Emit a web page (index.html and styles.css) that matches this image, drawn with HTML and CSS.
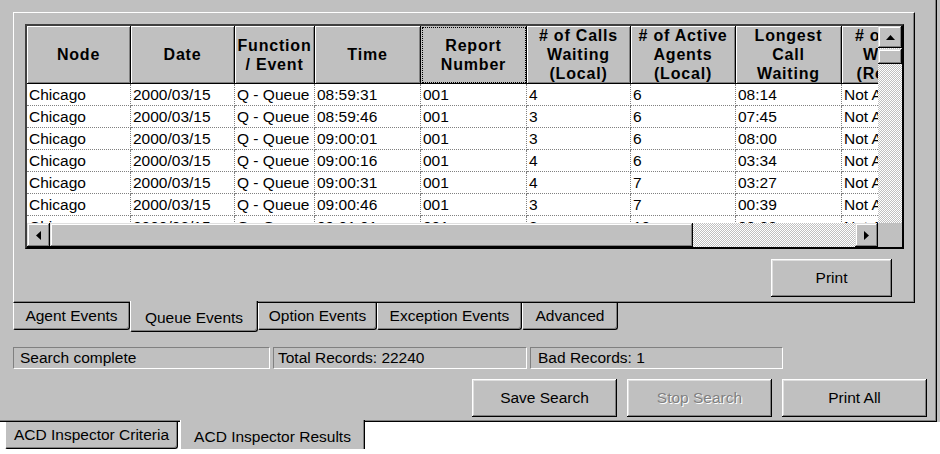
FILE: index.html
```html
<!DOCTYPE html>
<html lang="en">
<head>
  <meta charset="UTF-8">
  <title>ACD Inspector Results</title>
  <link rel="stylesheet" href="styles.css">
</head>
<body>
  <div class="window">
    <div class="outer-panel">
      <div class="inner-panel">
        <div class="grid">
          <div class="cells">
            <div class="row head">
              <div class="cell">Node</div>
              <div class="cell">Date</div>
              <div class="cell">Function<br>/ Event</div>
              <div class="cell">Time</div>
              <div class="cell focus">Report<br>Number</div>
              <div class="cell"># of Calls<br>Waiting<br>(Local)</div>
              <div class="cell"># of Active<br>Agents<br>(Local)</div>
              <div class="cell">Longest<br>Call<br>Waiting</div>
              <div class="cell"># of Calls<br>Waiting<br>(Remote)</div>
            </div>
            <div class="row data">
              <div class="cell">Chicago</div><div class="cell">2000/03/15</div><div class="cell">Q - Queue</div><div class="cell">08:59:31</div><div class="cell">001</div><div class="cell">4</div><div class="cell">6</div><div class="cell">08:14</div><div class="cell">Not Available</div>
            </div>
            <div class="row data">
              <div class="cell">Chicago</div><div class="cell">2000/03/15</div><div class="cell">Q - Queue</div><div class="cell">08:59:46</div><div class="cell">001</div><div class="cell">3</div><div class="cell">6</div><div class="cell">07:45</div><div class="cell">Not Available</div>
            </div>
            <div class="row data">
              <div class="cell">Chicago</div><div class="cell">2000/03/15</div><div class="cell">Q - Queue</div><div class="cell">09:00:01</div><div class="cell">001</div><div class="cell">3</div><div class="cell">6</div><div class="cell">08:00</div><div class="cell">Not Available</div>
            </div>
            <div class="row data">
              <div class="cell">Chicago</div><div class="cell">2000/03/15</div><div class="cell">Q - Queue</div><div class="cell">09:00:16</div><div class="cell">001</div><div class="cell">4</div><div class="cell">6</div><div class="cell">03:34</div><div class="cell">Not Available</div>
            </div>
            <div class="row data">
              <div class="cell">Chicago</div><div class="cell">2000/03/15</div><div class="cell">Q - Queue</div><div class="cell">09:00:31</div><div class="cell">001</div><div class="cell">4</div><div class="cell">7</div><div class="cell">03:27</div><div class="cell">Not Available</div>
            </div>
            <div class="row data">
              <div class="cell">Chicago</div><div class="cell">2000/03/15</div><div class="cell">Q - Queue</div><div class="cell">09:00:46</div><div class="cell">001</div><div class="cell">3</div><div class="cell">7</div><div class="cell">00:39</div><div class="cell">Not Available</div>
            </div>
            <div class="row data">
              <div class="cell">Chicago</div><div class="cell">2000/03/15</div><div class="cell">Q - Queue</div><div class="cell">09:01:01</div><div class="cell">001</div><div class="cell">3</div><div class="cell">10</div><div class="cell">00:28</div><div class="cell">Not Available</div>
            </div>
          </div>

          <div class="vscroll">
            <div class="sb-btn vbtn">
              <svg width="9" height="5" viewBox="0 0 9 5"><polygon points="0,5 9,5 4.5,0" fill="#000"/></svg>
            </div>
            <div class="vthumb"></div>
          </div>

          <div class="hscroll">
            <div class="sb-btn hbtn">
              <svg width="5" height="9" viewBox="0 0 5 9"><polygon points="5,0 5,9 0,4.5" fill="#000"/></svg>
            </div>
            <div class="hthumb"></div>
            <div class="track"></div>
            <div class="sb-btn hbtn">
              <svg width="5" height="9" viewBox="0 0 5 9"><polygon points="0,0 0,9 5,4.5" fill="#000"/></svg>
            </div>
          </div>

          <div class="corner"></div>
        </div>

        <div class="panel-actions">
          <button class="btn btn-print">Print</button>
        </div>
      </div>

      <div class="tabs">
        <div class="tab" style="width:117px">Agent Events</div>
        <div class="tab active" style="width:128px">Queue Events</div>
        <div class="tab" style="width:119px">Option Events</div>
        <div class="tab" style="width:145px">Exception Events</div>
        <div class="tab" style="width:96px">Advanced</div>
      </div>

      <div class="status">
        <div class="field field-msg">Search complete</div>
        <div class="field field-total">Total Records: 22240</div>
        <div class="field field-bad">Bad Records: 1</div>
      </div>

      <div class="actions">
        <button class="btn btn-wide">Save Search</button>
        <button class="btn btn-wide" disabled>Stop Search</button>
        <button class="btn btn-wide">Print All</button>
      </div>
    </div>
  </div>

  <div class="tabs outer-tabs">
    <div class="tab" style="width:173px">ACD Inspector Criteria</div>
    <div class="tab active" style="width:185px">ACD Inspector Results</div>
  </div>
</body>
</html>
```

FILE: styles.css
```css
* {
  box-sizing: border-box;
}
body {
  margin: 0;
  background-color: #fff;
  font-family: "Liberation Sans", Arial, sans-serif;
  font-size: 15.5px;
  color: #000;
}
.window {
  width: 940px;
  height: 422px;
  background-color: #c0c0c0;
}
.outer-panel {
  width: 937px;
  height: 422px;
  padding: 12px 0 0 13px;
  border-right: 1px solid #000;
  border-bottom: 1px solid #000;
  box-shadow: inset -1px -1px #808080;
}
.inner-panel {
  width: 902px;
  height: 291px;
  padding: 11px 0 0 11px;
  border-top: 1px solid #fff;
  border-left: 1px solid #fff;
  border-right: 1px solid #000;
  border-bottom: 1px solid #000;
  box-shadow: inset -1px -1px #808080;
}

/* data grid */
.grid {
  width: 879px;
  height: 225px;
  border: 2px solid #000;
  border-color: #404040 #000 #000 #404040;
  display: grid;
  grid-template-columns: 851px 24px;
  grid-template-rows: 197px 24px;
}
.cells {
  overflow: hidden;
  background-color: #fff;
}
.row {
  display: flex;
}
.cell {
  flex: none;
  white-space: nowrap;
  overflow: hidden;
}
.row .cell:nth-child(1) { width: 104px; }
.row .cell:nth-child(2) { width: 104px; }
.row .cell:nth-child(3) { width: 80px; }
.row .cell:nth-child(4) { width: 106px; }
.row .cell:nth-child(5) { width: 106px; }
.row .cell:nth-child(6) { width: 104px; }
.row .cell:nth-child(7) { width: 105px; }
.row .cell:nth-child(8) { width: 106px; }
.row .cell:nth-child(9) { width: 106px; }
.head .cell {
  height: 58px;
  display: flex;
  align-items: center;
  justify-content: center;
  text-align: center;
  background-color: #c0c0c0;
  font-size: 16px;
  font-weight: bold;
  letter-spacing: 0.8px;
  line-height: 19px;
  border-right: 1px solid #000;
  border-bottom: 1px solid #000;
  box-shadow: inset 1px 1px #fff, inset -1px -1px #808080;
}
.head .focus {
  box-shadow: none;
  outline: 1px dotted #000;
  outline-offset: -2px;
}
.data .cell {
  height: 22px;
  line-height: 21px;
  padding-left: 2px;
  border-right: 1px dotted #808080;
  border-bottom: 1px dotted #808080;
}

/* scrollbars */
.vscroll,
.hscroll,
.track {
  background: repeating-conic-gradient(#c0c0c0 0% 25%, #fff 0% 50%) 0 0 / 2px 2px;
}
.vscroll {
  display: flex;
  flex-direction: column;
}
.hscroll {
  display: flex;
}
.sb-btn,
.vthumb,
.hthumb {
  background-color: #c0c0c0;
  box-shadow: inset -1px -1px #000, inset 1px 1px #dfdfdf, inset -2px -2px #808080, inset 2px 2px #fff;
}
.sb-btn {
  display: flex;
  align-items: center;
  justify-content: center;
}
.vbtn {
  height: 22px;
}
.vthumb {
  height: 15px;
  margin-top: 1px;
}
.hbtn {
  width: 23px;
}
.hthumb {
  width: 643px;
}
.track {
  flex: 1;
}
.corner {
  background-color: #c0c0c0;
}

/* buttons */
.panel-actions {
  display: flex;
  justify-content: flex-end;
  margin-top: 10px;
  padding-right: 22px;
}
.btn {
  height: 38px;
  padding: 0;
  border: none;
  font-family: inherit;
  font-size: 15.5px;
  color: #000;
  background-color: #c0c0c0;
  box-shadow: inset -1px -1px #000, inset 1px 1px #fff, inset -2px -2px #808080, inset 2px 2px #dfdfdf;
}
.btn:disabled {
  color: #808080;
  text-shadow: 1px 1px #fff;
}
.btn-print {
  width: 121px;
}
.btn-wide {
  width: 145px;
}

/* tabs */
.tabs {
  display: flex;
  height: 27px;
  align-items: flex-start;
}
.tab {
  height: 27px;
  display: flex;
  align-items: center;
  justify-content: center;
  white-space: nowrap;
  background-color: #c0c0c0;
  border-left: 1px solid #fff;
  border-right: 1px solid #000;
  border-bottom: 1px solid #000;
  border-radius: 0 0 3px 2px;
  box-shadow: inset -1px -1px #808080;
}
.tab.active {
  position: relative;
  z-index: 1;
  height: 31px;
  margin-top: -2px;
  padding-top: 3px;
}
.outer-tabs {
  margin-left: 5px;
  gap: 2px;
}
.outer-tabs .tab.active {
  height: 32px;
}

/* status bar */
.status {
  display: flex;
  gap: 3px;
  margin-top: 17px;
}
.field {
  height: 22px;
  line-height: 20px;
  white-space: nowrap;
  border-top: 1px solid #808080;
  border-left: 1px solid #808080;
  border-right: 1px solid #fff;
  border-bottom: 1px solid #fff;
}
.field-msg {
  width: 257px;
  padding-left: 6px;
}
.field-total {
  width: 254px;
  padding-left: 4px;
}
.field-bad {
  width: 253px;
  padding-left: 7px;
}
.actions {
  display: flex;
  justify-content: flex-end;
  gap: 10px;
  margin-top: 10px;
  padding-right: 9px;
}
```
